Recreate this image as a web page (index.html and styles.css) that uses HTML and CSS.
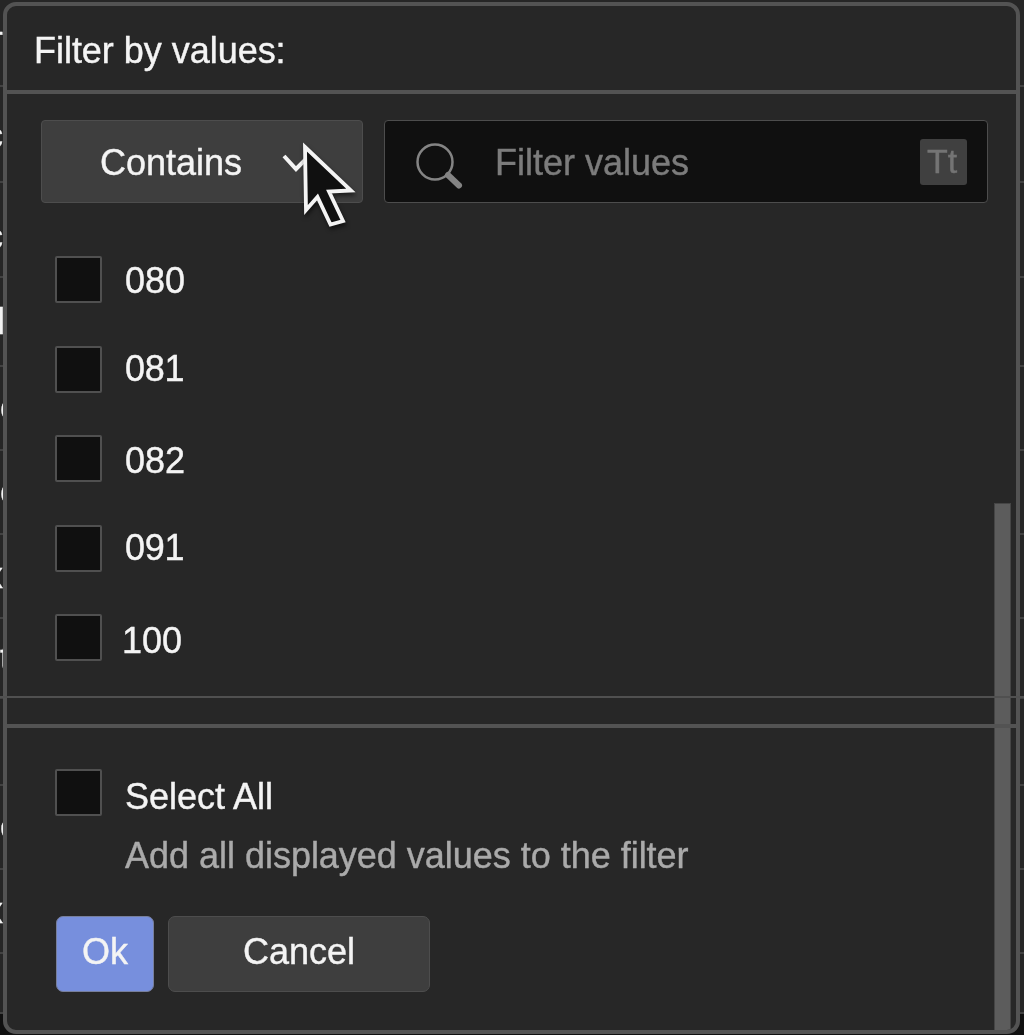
FILE: index.html
```html
<!DOCTYPE html>
<html lang="en">
<head>
<meta charset="utf-8">
<title>Filter by values</title>
<link rel="stylesheet" href="styles.css">
</head>
<body>
<div class="sheet" aria-hidden="true">
  <div class="row r1"><span class="back20">T</span></div>
  <div class="row r2"><span class="back15">c</span></div>
  <div class="row r3"><span class="back15">c</span></div>
  <div class="row r4"><span class="back2">l</span></div>
  <div class="row r5"><span>o</span></div>
  <div class="row r6"><span>o</span></div>
  <div class="row r7"><span class="back15">x</span></div>
  <div class="row r8"><span>t</span></div>
  <div class="row r9"></div>
  <div class="row r10"><span>c</span></div>
  <div class="row r11"><span class="back15">x</span></div>
  <div class="row r12"></div>
</div>
<main class="dialog">
  <header class="title"><h1>Filter by values:</h1></header>
  <section class="values">
    <div class="tools">
      <button class="mode"><span>Contains</span>
        <svg class="chevron" width="26" height="18" viewBox="0 0 26 18"><path d="M2 2l12 13L26 3"/></svg>
      </button>
      <div class="search">
        <svg class="lens" width="50" height="50" viewBox="0 0 50 50"><circle cx="21" cy="21" r="17.5"/><path d="M34 34l11 10.500"/></svg>
        <span class="placeholder">Filter values</span>
        <span class="case">Tt</span>
      </div>
    </div>
    <ul class="list">
      <li><i class="box"></i><span>080</span></li>
      <li class="up"><i class="box"></i><span>081</span></li>
      <li class="down"><i class="box"></i><span>082</span></li>
      <li class="up"><i class="box"></i><span>091</span></li>
      <li class="down one"><i class="box"></i><span>100</span></li>
    </ul>
  </section>
  <footer class="actions">
    <div class="all"><i class="box"></i><div class="labels"><span class="name">Select All</span><span class="hint">Add all displayed values to the filter</span></div></div>
    <div class="buttons"><button class="ok">Ok</button><button class="cancel">Cancel</button></div>
  </footer>
  <div class="scrollbar"></div>
</main>
<div class="rule"></div>
<div class="footrule"></div>
<svg class="cursor" width="64" height="96" viewBox="0 0 64 96"><path d="M10 6L56 49.500L34 50.500L48 80L35.500 83.500L22.500 56L11 69Z"/></svg>
</body>
</html>
```
FILE: styles.css
```css
* { box-sizing: border-box; }
body { margin: 0; width: 1024px; height: 1035px; position: relative; overflow: hidden; background: #101010; color: #f4f4f4; font: 36px/40px "Liberation Sans", Arial, sans-serif; -webkit-text-stroke: .4px; }
h1, ul { margin: 0; padding: 0; font: inherit; list-style: none; }
button { font: inherit; color: inherit; padding: 0; -webkit-text-stroke: inherit; }
svg { display: block; fill: none; }
.sheet { display: flex; flex-direction: column; will-change: transform; }
.row { flex: none; height: 84px; border-bottom: 2px solid #424242; background: #262626; display: flex; align-items: center; overflow: hidden; }
.r1 { height: 87px; padding-top: 6px; }
.r2 { height: 96px; padding-top: 3px; }
.r3 { height: 95px; padding-top: 14px; }
.r4 { height: 89px; }
.r8 { height: 80px; }
.r9 { height: 87px; }
.r12 { height: 60px; }
.back20 { margin-left: -19px; }
.back15 { margin-left: -15px; }
.back2 { margin-left: -3px; }

.dialog { position: absolute; left: 3px; top: 2px; width: 1017px; height: 1032px; display: flex; flex-direction: column; border: 4px solid #535353; border-radius: 13px; background: #272727; overflow: hidden; }
.title { height: 88px; flex: none; padding: 25px 27px; border-bottom: 4px solid #535353; }
.title h1 { letter-spacing: -.03px; }
.values { height: 630px; flex: none; padding: 26px 28px 0 34px; }
.tools { display: flex; gap: 21px; }
.mode { width: 322px; height: 83px; display: flex; align-items: center; padding: 2px 0 0 58px; border: 1px solid #4d4d4d; border-radius: 4px; background: #3e3e3e; }
.chevron { margin-left: 40px; stroke: #f4f4f4; stroke-width: 4; }
.search { width: 604px; height: 83px; display: flex; align-items: center; padding: 0 20px 0 29px; border: 1px solid #4d4d4d; border-radius: 4px; background: #101010; }
.lens { margin-top: 8px; stroke: #848484; stroke-width: 2.500; }
.lens path { stroke-width: 6; stroke-linecap: round; }
.placeholder { margin: 2px 0 0 31px; color: #7c7c7c; }
.case { margin-left: auto; width: 47px; height: 46px; border-radius: 3px; background: #404040; color: #747474; font-size: 34px; line-height: 44px; text-align: center; padding-right: 3px; }
.list { display: flex; flex-direction: column; gap: 42.500px; padding: 53px 0 0 14px; }
.list li { display: flex; align-items: center; height: 47px; gap: 23px; }
.list span { position: relative; top: 1px; }
.list .up span { top: 0; letter-spacing: -.3px; }
.list .down span { top: 2px; }
.list .one span { left: -3px; top: 3px; }
.box { flex: none; width: 47px; height: 47px; border: 2px solid #505050; border-radius: 2px; background: #101010; }
.actions { flex: 1; padding: 45px 48px 0; }
.all { display: flex; gap: 23px; height: 147px; }
.labels { display: flex; flex-direction: column; gap: 19px; padding-top: 8px; }
.hint { color: #aaa; letter-spacing: -.02px; }
.buttons { display: flex; gap: 14px; padding-left: 1px; }
.buttons button { height: 76px; border-radius: 7px; padding-bottom: 4px; }
.ok { width: 98px; border: 1px solid #777f9c; background: #778fdd; }
.cancel { width: 262px; border: 1px solid #4d4d4d; background: #3e3e3e; }
.scrollbar { position: absolute; left: 987px; top: 497px; width: 17px; bottom: 0; background: #5c5c5c; border: solid #454545; border-width: 1px 1px 0; }
.rule { position: absolute; left: 0; top: 696px; width: 1024px; height: 2px; background: #505050; }
.footrule { position: absolute; left: 6px; top: 724px; width: 1011px; height: 4px; background: #535353; }
.cursor { position: absolute; left: 295px; top: 141px; fill: #101010; stroke: #f4f4f4; stroke-width: 3.800; filter: drop-shadow(1px 3px 2px #0008); }
```
